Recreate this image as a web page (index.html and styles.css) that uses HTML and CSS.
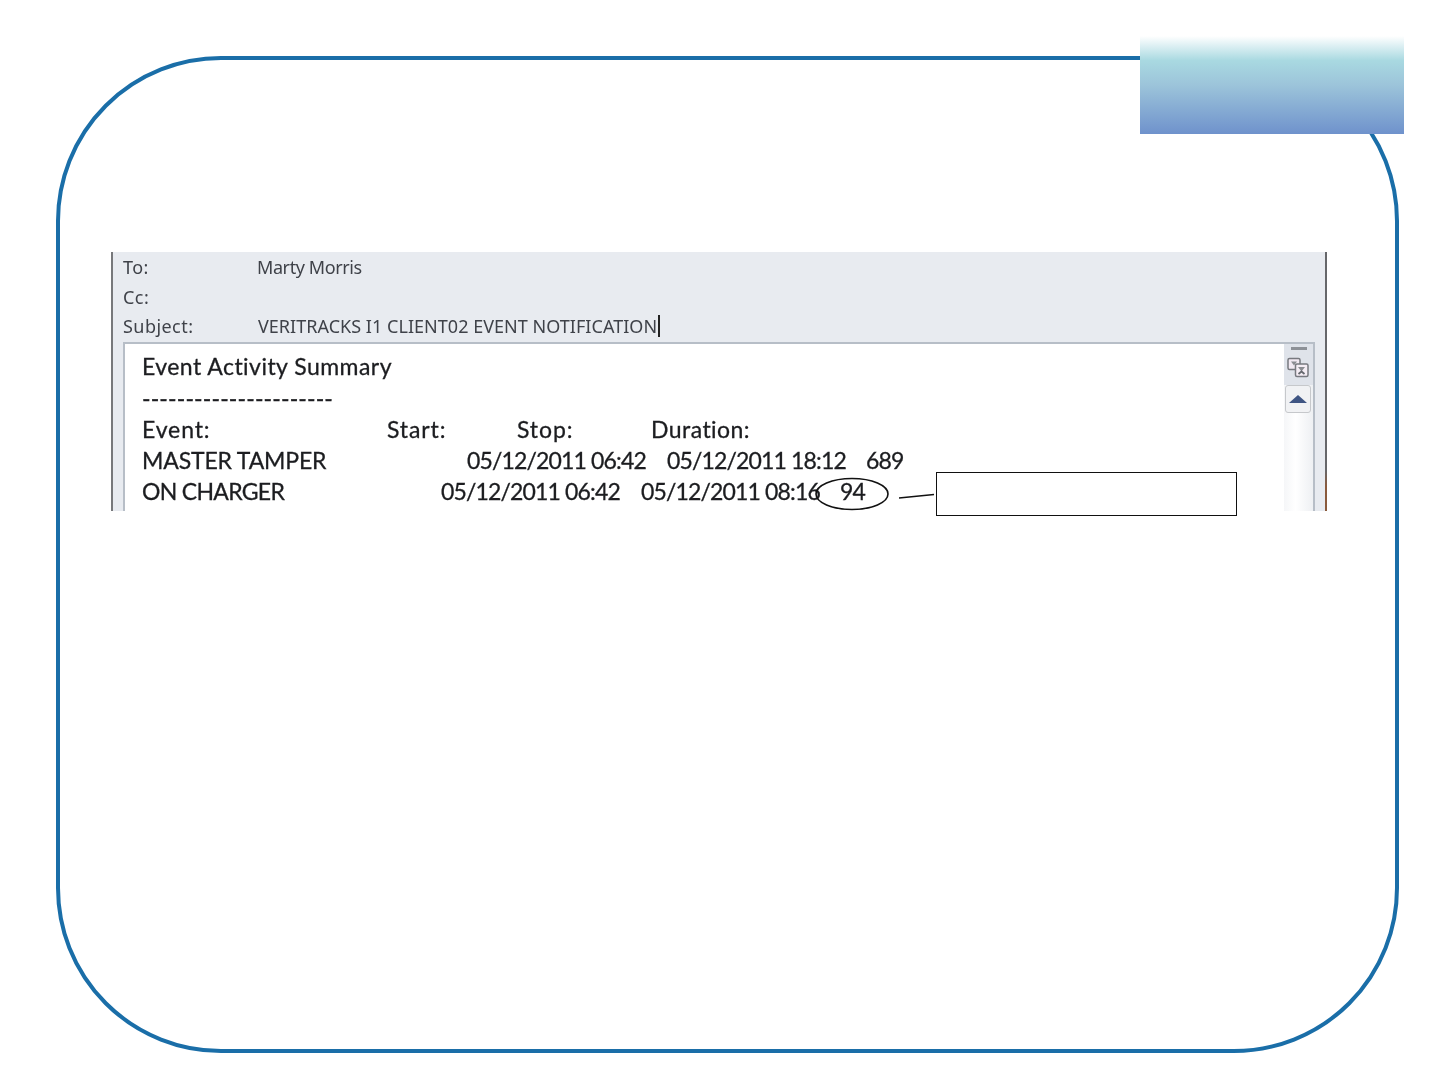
FILE: index.html
```html
<!DOCTYPE html>
<html lang="en">
<head>
<meta charset="utf-8">
<title>Event notification</title>
<link rel="stylesheet" href="styles.css">
</head>
<body>
<main class="slide">
  <div class="banner"></div>
  <section class="frame">
    <div class="email">
      <div class="fields">
        <div class="field"><span class="label">To:</span><span class="value">Marty Morris</span></div>
        <div class="field"><span class="label">Cc:</span></div>
        <div class="field"><span class="label">Subject:</span><span class="value subject">VERITRACKS I1 CLIENT02 EVENT NOTIFICATION</span></div>
      </div>
      <div class="message">
        <div class="text">
          <div class="line title">Event Activity Summary</div>
          <div class="line rule">----------------------</div>
          <div class="line heads"><span class="c-event">Event:</span><span class="c-start">Start:</span><span class="c-stop">Stop:</span><span class="c-dur">Duration:</span></div>
          <div class="line"><span class="c-name1">MASTER TAMPER</span><span class="c-date num">05/12/2011 06:42</span><span class="c-date num">05/12/2011 18:12</span><span class="num total">689</span></div>
          <div class="line"><span class="c-name2">ON CHARGER</span><span class="c-date num">05/12/2011 06:42</span><span class="c-date2 num">05/12/2011 08:16</span><span class="num">94</span></div>
        </div>
        <div class="scrollbar">
          <div class="scroll-head">
            <div class="dash"></div>
            <svg class="people" width="22" height="21" viewBox="0 0 22 21" aria-hidden="true">
              <rect x="1" y="1.500" width="12" height="11" rx="1.500" fill="#f1e9f2" stroke="#77797f" stroke-width="1.500"/>
              <rect x="8.500" y="7" width="12.500" height="12.500" rx="1.500" fill="#f4edf4" stroke="#77797f" stroke-width="1.500"/>
              <path d="M4 4.500h6l-3 4zM11 10h7l-3.500 4.500z" fill="#8a8c91"/>
              <path d="M11.500 17l3-2.500 3 2.500" fill="none" stroke="#66686e" stroke-width="1.800"/>
            </svg>
          </div>
          <div class="scroll-btn"><div class="arrow"></div></div>
        </div>
      </div>
      <div class="edge-tint"></div>
      <svg class="callout" width="130" height="40" viewBox="0 0 130 40" aria-hidden="true">
        <ellipse cx="35" cy="21" rx="36" ry="15.500" fill="none" stroke="#111" stroke-width="1.600"/>
        <path d="M82 25L117 21.500" stroke="#111" stroke-width="1.600"/>
      </svg>
      <div class="callout-box"></div>
    </div>
  </section>
</main>
</body>
</html>
```
FILE: styles.css
```css
* { box-sizing: border-box; }
html, body { margin: 0; padding: 0; background: #fff; }
.slide { position: relative; width: 1440px; height: 1080px; padding: 56px 41px 27px 56px; overflow: hidden; }
.frame { width: 1343px; height: 997px; border: 4px solid #1a6ea8; border-radius: 165px; padding: 192px 0 0 51px; }
.banner { position: absolute; left: 1140px; top: 36px; width: 264px; height: 98px; background: linear-gradient(to bottom, #ffffff 0%, #a9d9e1 25%, #9cc4da 50%, #6f92cc 100%); }
.email { position: relative; width: 1216px; height: 259px; background: #e8ebf0; border-left: 2px solid #77787b; border-right: 2px solid #66676a; padding: 0 10px; }
.fields { height: 90px; padding: 1px 0 0; font-family: "Noto Sans", sans-serif; font-size: 18px; letter-spacing: -0.4px; color: #3f4249; filter: blur(0.35px); }
.field { display: flex; height: 29.500px; line-height: 29.500px; }
.label { width: 134px; letter-spacing: 0.45px; }
.subject { border-right: 2px solid #222; line-height: 22px; height: 22px; margin: 3px 0 0 1px; padding-right: 1px; letter-spacing: 0.03px; white-space: nowrap; }
.message { display: flex; height: 169px; background: #fff; border: 2px solid #b7bec7; border-bottom: 0; }
.text { flex: 1; padding: 7px 0 0 17px; font-family: Lato, sans-serif; font-size: 23px; color: #1c1d20; -webkit-text-stroke: 0.3px #1c1d20; filter: blur(0.35px); }
.line { display: flex; height: 31.250px; line-height: 31.250px; white-space: pre; }
.title { letter-spacing: 0.46px; }
.rule { letter-spacing: 0.14px; padding-top: 1px; }
.heads { letter-spacing: 0.9px; }
.num { letter-spacing: -0.85px; }
.total { margin-left: -1px; }
.c-event { width: 245px; }
.c-start { width: 130px; }
.c-stop { width: 134px; }
.c-dur { letter-spacing: 0.45px; }
.c-name1 { width: 325px; letter-spacing: -0.15px; }
.c-name2 { width: 299px; letter-spacing: -0.7px; }
.c-date { width: 200px; }
.c-date2 { width: 199px; }
.scrollbar { width: 29px; background: linear-gradient(to right, #f5f6f8, #fff 40%, #eef0f3); }
.scroll-head { height: 41px; background: #dfe3ea; padding-top: 3px; }
.dash { width: 16px; height: 3px; margin: 0 auto 7px; background: #8d9197; }
.people { display: block; margin-left: 3px; }
.scroll-btn { width: 26px; height: 28px; margin-left: 1px; background: #f1f2f4; border: 1.500px solid #c6c8cb; border-radius: 3px; display: flex; align-items: center; justify-content: center; }
.arrow { width: 0; height: 0; border-left: 9px solid transparent; border-right: 9px solid transparent; border-bottom: 8px solid #3f5583; }
.edge-tint { position: absolute; right: -2px; top: 218px; width: 2px; height: 41px; background: linear-gradient(to bottom, #66676a, #8a5a3c 40%, #8a5a3c); }
.callout { position: absolute; left: 704px; top: 221px; overflow: visible; }
.callout-box { position: absolute; left: 823px; top: 220px; width: 301px; height: 44px; background: #fff; border: 1.500px solid #111; }
```
